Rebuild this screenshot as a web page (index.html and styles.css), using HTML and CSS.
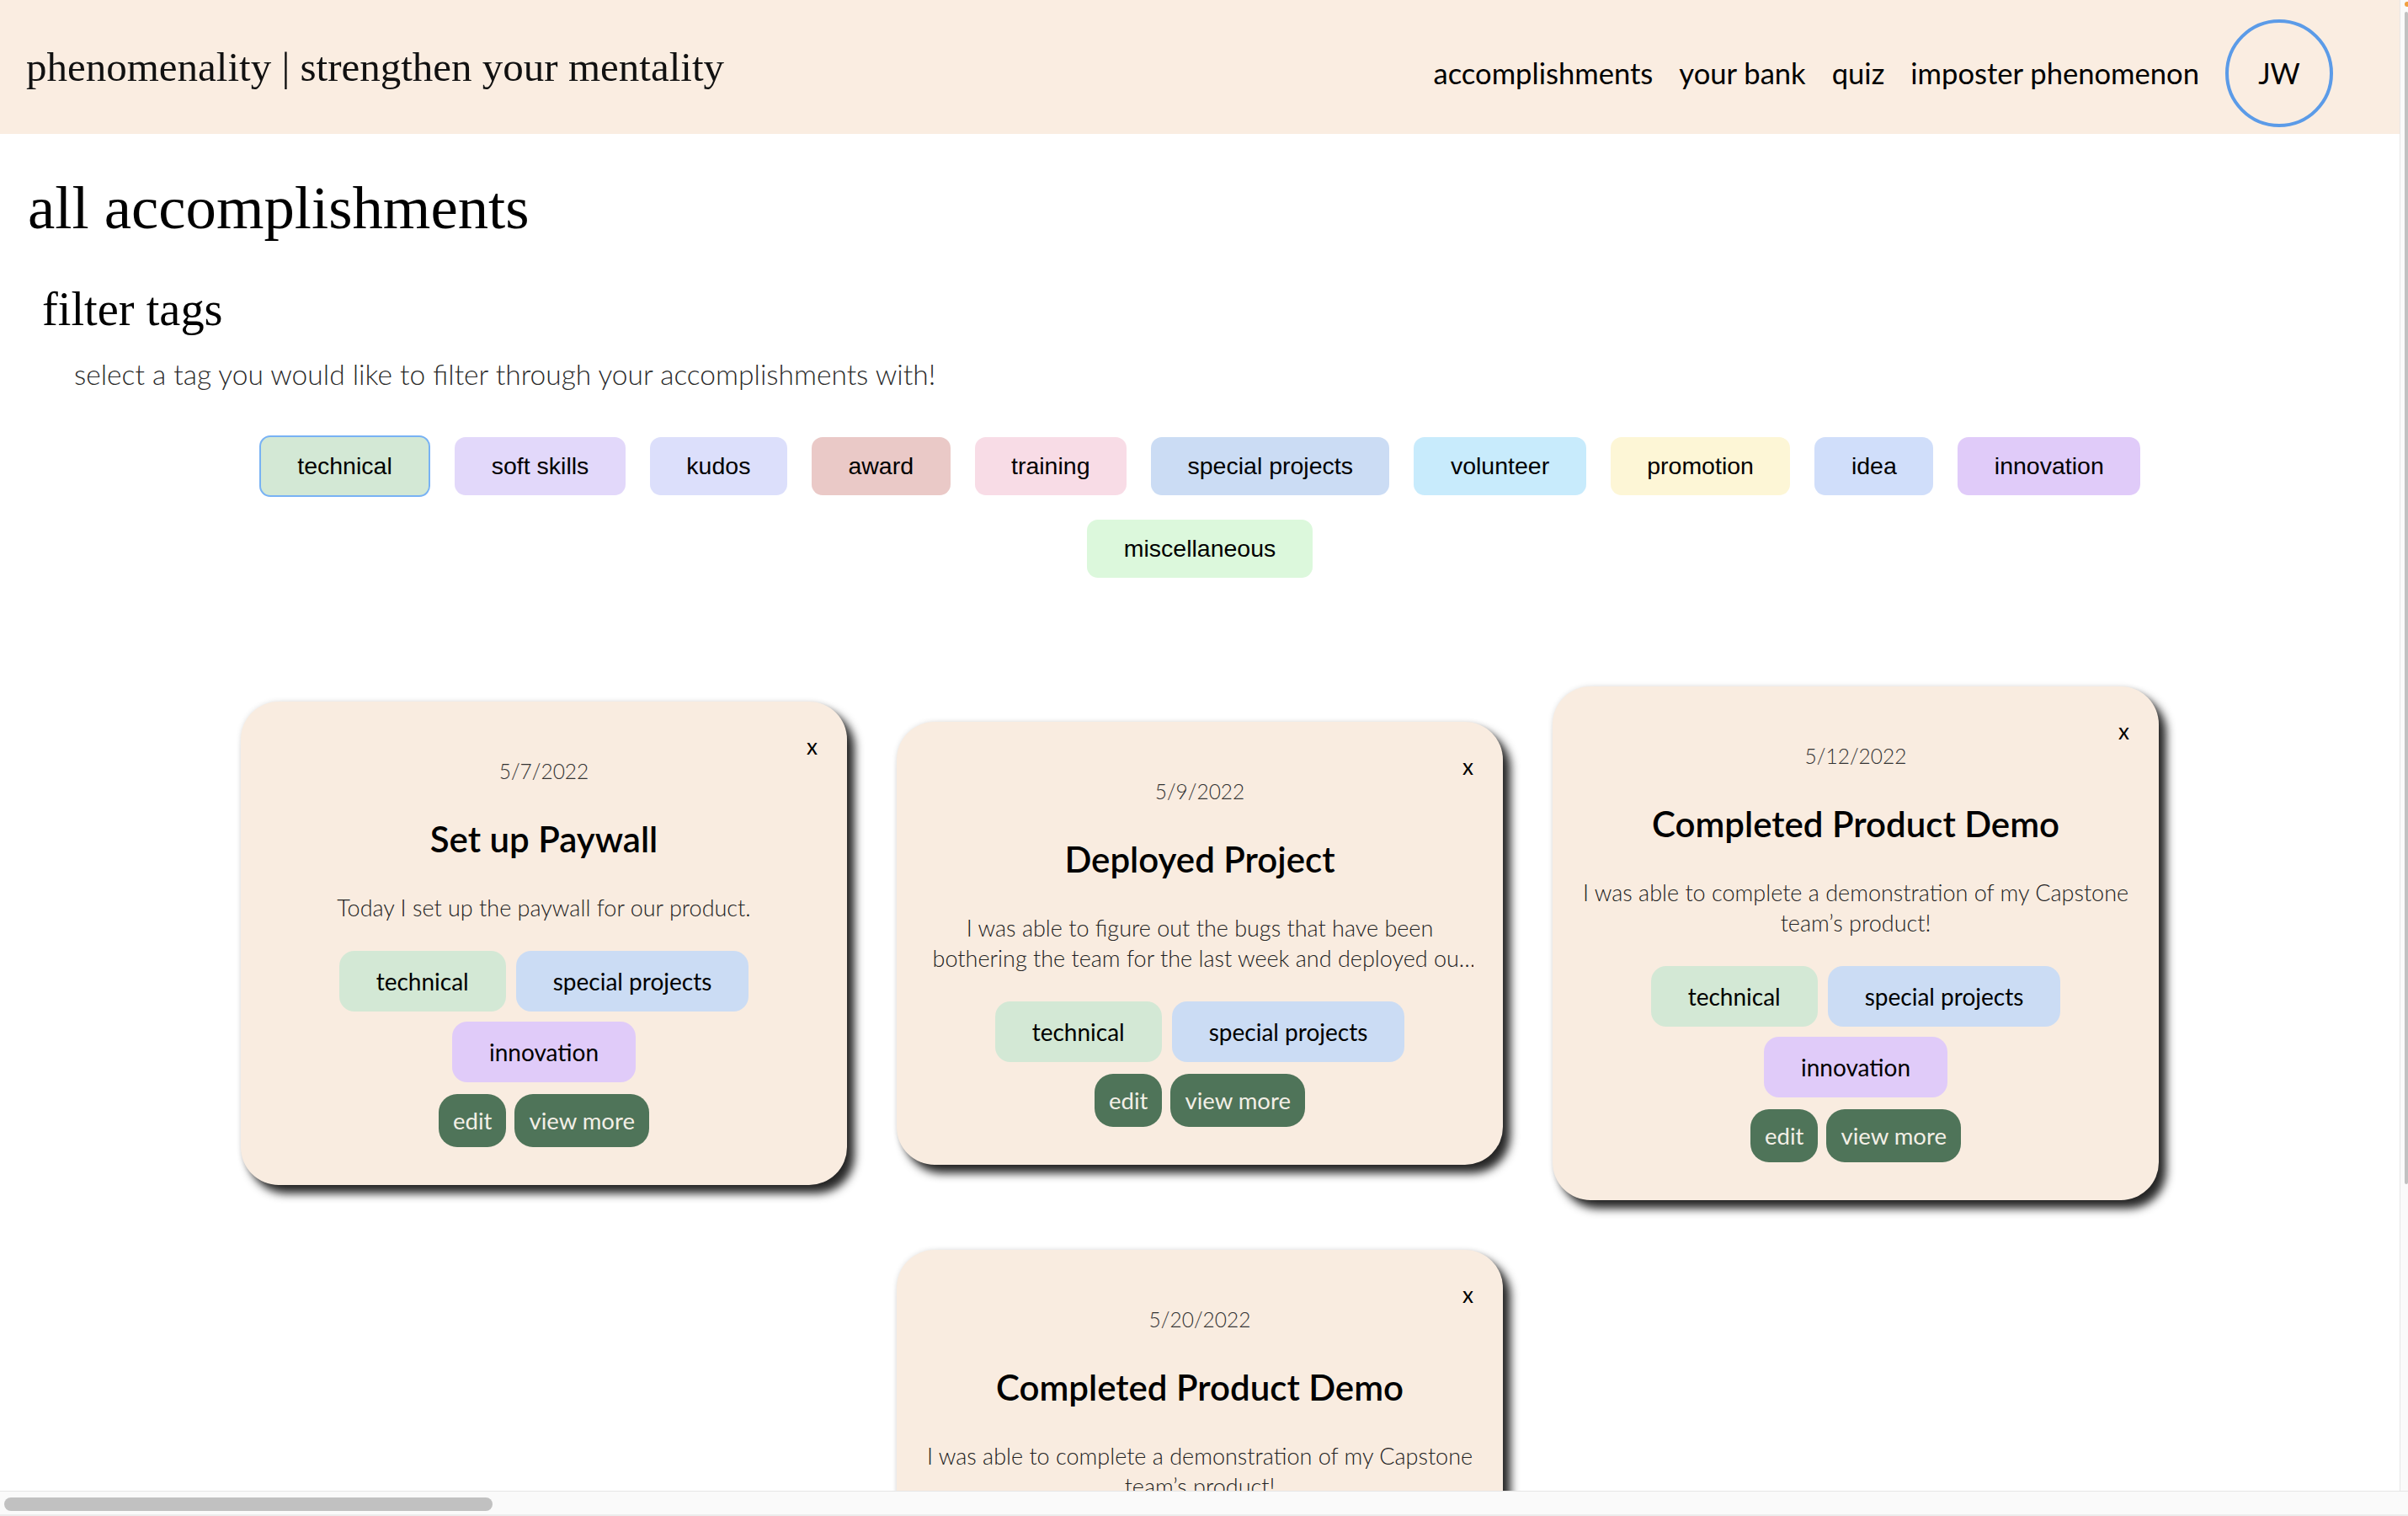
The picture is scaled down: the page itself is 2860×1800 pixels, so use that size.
FILE: index.html
```html
<!DOCTYPE html>
<html lang="en">
<head>
<meta charset="utf-8">
<title>phenomenality | all accomplishments</title>
<link rel="stylesheet" href="styles.css">
</head>
<body>
<div class="page">
  <header class="topbar">
    <div class="brand">phenomenality | strengthen your mentality</div>
    <nav class="nav">
      <a class="nav-link">accomplishments</a>
      <a class="nav-link">your bank</a>
      <a class="nav-link">quiz</a>
      <a class="nav-link">imposter phenomenon</a>
      <div class="avatar">JW</div>
    </nav>
  </header>

  <main class="main">
    <h1 class="page-title">all accomplishments</h1>
    <h2 class="section-title">filter tags</h2>
    <p class="section-sub">select a tag you would like to filter through your accomplishments with!</p>

    <div class="filter-tags">
      <span class="ftag tag-technical is-selected">technical</span>
      <span class="ftag tag-soft">soft skills</span>
      <span class="ftag tag-kudos">kudos</span>
      <span class="ftag tag-award">award</span>
      <span class="ftag tag-training">training</span>
      <span class="ftag tag-special">special projects</span>
      <span class="ftag tag-volunteer">volunteer</span>
      <span class="ftag tag-promotion">promotion</span>
      <span class="ftag tag-idea">idea</span>
      <span class="ftag tag-innovation">innovation</span>
      <span class="ftag tag-misc">miscellaneous</span>
    </div>

    <section class="cards">
      <article class="card">
        <span class="card-close">x</span>
        <div class="card-date">5/7/2022</div>
        <h3 class="card-title">Set up Paywall</h3>
        <p class="card-desc">Today I set up the paywall for our product.</p>
        <div class="card-tags">
          <span class="ctag tag-technical">technical</span>
          <span class="ctag tag-special">special projects</span>
          <span class="ctag tag-innovation">innovation</span>
        </div>
        <div class="card-actions">
          <span class="btn">edit</span>
          <span class="btn">view more</span>
        </div>
      </article>

      <article class="card">
        <span class="card-close">x</span>
        <div class="card-date">5/9/2022</div>
        <h3 class="card-title">Deployed Project</h3>
        <p class="card-desc">I was able to figure out the bugs that have been bothering the team for the last week and deployed our project to production so everyone can use it!</p>
        <div class="card-tags">
          <span class="ctag tag-technical">technical</span>
          <span class="ctag tag-special">special projects</span>
        </div>
        <div class="card-actions">
          <span class="btn">edit</span>
          <span class="btn">view more</span>
        </div>
      </article>

      <article class="card">
        <span class="card-close">x</span>
        <div class="card-date">5/12/2022</div>
        <h3 class="card-title">Completed Product Demo</h3>
        <p class="card-desc">I was able to complete a demonstration of my Capstone team’s product!</p>
        <div class="card-tags">
          <span class="ctag tag-technical">technical</span>
          <span class="ctag tag-special">special projects</span>
          <span class="ctag tag-innovation">innovation</span>
        </div>
        <div class="card-actions">
          <span class="btn">edit</span>
          <span class="btn">view more</span>
        </div>
      </article>

      <article class="card">
        <span class="card-close">x</span>
        <div class="card-date">5/20/2022</div>
        <h3 class="card-title">Completed Product Demo</h3>
        <p class="card-desc">I was able to complete a demonstration of my Capstone team’s product!</p>
        <div class="card-tags">
          <span class="ctag tag-technical">technical</span>
          <span class="ctag tag-special">special projects</span>
          <span class="ctag tag-innovation">innovation</span>
        </div>
        <div class="card-actions">
          <span class="btn">edit</span>
          <span class="btn">view more</span>
        </div>
      </article>
    </section>
  </main>
</div>

<div class="vscroll"><div class="vscroll-dot"></div><div class="vscroll-thumb"></div></div>
<div class="hscroll"><div class="hscroll-thumb"></div></div>
</body>
</html>
```

FILE: styles.css
```css
* { box-sizing: border-box; }

html, body {
  margin: 0;
  padding: 0;
  overflow: hidden;
  background: #ffffff;
}

body {
  width: 2860px;
  height: 1800px;
  font-family: "Lato", "Noto Sans", sans-serif;
  color: #000;
}

.page { width: 2850px; }

/* ---------- header ---------- */
.topbar {
  height: 159px;
  background: #faede1;
  display: flex;
  align-items: center;
  justify-content: space-between;
  padding: 14px 79px 0 31px;
}

.brand {
  margin-bottom: 14px;
  font-family: "Liberation Serif", "DejaVu Serif", serif;
  font-size: 49px;
  line-height: 58px;
  color: #111;
}

.nav {
  display: flex;
  align-items: center;
  gap: 31px;
}

.nav-link {
  font-size: 34.6px;
  line-height: 42px;
  color: #000;
  text-decoration: none;
}

.avatar {
  width: 128px;
  height: 128px;
  border: 4px solid #5b9be8;
  border-radius: 50%;
  display: flex;
  align-items: center;
  justify-content: center;
  font-size: 34px;
  line-height: 40px;
}

/* ---------- headings ---------- */
.page-title {
  margin: 47px 0 0 33px;
  font-family: "Liberation Serif", "DejaVu Serif", serif;
  font-weight: 400;
  font-size: 72.7px;
  line-height: 82px;
}

.section-title {
  margin: 47px 0 0 50px;
  font-family: "Liberation Serif", "DejaVu Serif", serif;
  font-weight: 400;
  font-size: 56.4px;
  line-height: 64px;
}

.section-sub {
  margin: 25px 0 0 88px;
  font-weight: 300;
  font-size: 33.5px;
  line-height: 40px;
  color: #2b2b2b;
}

/* ---------- filter tags ---------- */
.filter-tags {
  max-width: 2300px;
  margin: 53px auto 0;
  display: flex;
  flex-wrap: wrap;
  justify-content: center;
  align-items: center;
  gap: 27px 29px;
}

.ftag {
  font-family: "Liberation Sans", Arial, sans-serif;
  font-size: 28.5px;
  line-height: 33px;
  padding: 18px 43.5px;
  border-radius: 13px;
  color: #000;
}

.ftag.is-selected { border: 2px solid #78b2f4; }

.tag-technical  { background: #d3e8d5; }
.tag-soft       { background: #e2d8fa; }
.tag-kudos      { background: #dcdffb; }
.tag-award      { background: #eac9c7; }
.tag-training   { background: #f8dce6; }
.tag-special    { background: #cbdcf4; }
.tag-volunteer  { background: #c8ebfc; }
.tag-promotion  { background: #fdf6d6; }
.tag-idea       { background: #d0defa; }
.tag-innovation { background: #e0cbf9; }
.tag-misc       { background: #dcf8dc; }

/* ---------- cards ---------- */
.cards {
  margin-top: 129px;
  display: flex;
  flex-wrap: wrap;
  justify-content: center;
  align-items: center;
  gap: 59px;
}

.card {
  position: relative;
  width: 720px;
  padding: 66px 35px 45px;
  background: #f9ece0;
  border-radius: 45px;
  box-shadow: 9px 10px 11px rgba(0, 0, 0, 0.85), 0 0 6px rgba(0, 0, 0, 0.12);
  text-align: center;
}

.card-close {
  position: absolute;
  top: 38px;
  right: 35px;
  font-size: 26px;
  line-height: 30px;
  color: #000;
}

.card-date {
  font-weight: 300;
  font-size: 24.5px;
  line-height: 34px;
  color: #333;
}

.card-title {
  margin: 37px 0 0;
  font-weight: 600;
  font-size: 42px;
  line-height: 52px;
  color: #000;
}

.card-desc {
  margin: 38px 0 0;
  font-weight: 300;
  font-size: 27px;
  line-height: 36px;
  color: #222;
  display: -webkit-box;
  -webkit-line-clamp: 2;
  -webkit-box-orient: vertical;
  overflow: hidden;
}

.card-tags {
  margin-top: 33px;
  display: flex;
  flex-wrap: wrap;
  justify-content: center;
  gap: 12px;
}

.ctag {
  font-size: 28px;
  line-height: 34px;
  padding: 19px 44px;
  border-radius: 18px;
  color: #000;
}

.card-actions {
  margin-top: 14px;
  display: flex;
  justify-content: center;
  gap: 10px;
}

.btn {
  background: #4f7459;
  color: #f3efe6;
  font-size: 27.5px;
  line-height: 33px;
  padding: 15px 17px;
  border-radius: 22px;
}

/* ---------- browser scrollbars ---------- */
.vscroll {
  position: fixed;
  top: 0;
  right: 0;
  width: 10px;
  height: 1770px;
  background: #fafafa;
  border-left: 1px solid #e6e6e6;
}

.vscroll-dot {
  position: absolute;
  top: 2px;
  right: 0;
  width: 4px;
  height: 6px;
  border-radius: 3px 0 0 3px;
  background: #f0a040;
}

.vscroll-thumb {
  position: absolute;
  top: 14px;
  right: 0;
  width: 4px;
  height: 1392px;
  border-radius: 2px;
  background: #c1c1c1;
}

.hscroll {
  position: fixed;
  left: 0;
  bottom: 0;
  width: 2860px;
  height: 30px;
  background: #fafafa;
  border-top: 1px solid #e6e6e6;
  border-bottom: 2px solid #ececec;
}

.hscroll-thumb {
  position: absolute;
  top: 7px;
  left: 5px;
  width: 580px;
  height: 16px;
  border-radius: 8px;
  background: #c1c1c1;
}
```
